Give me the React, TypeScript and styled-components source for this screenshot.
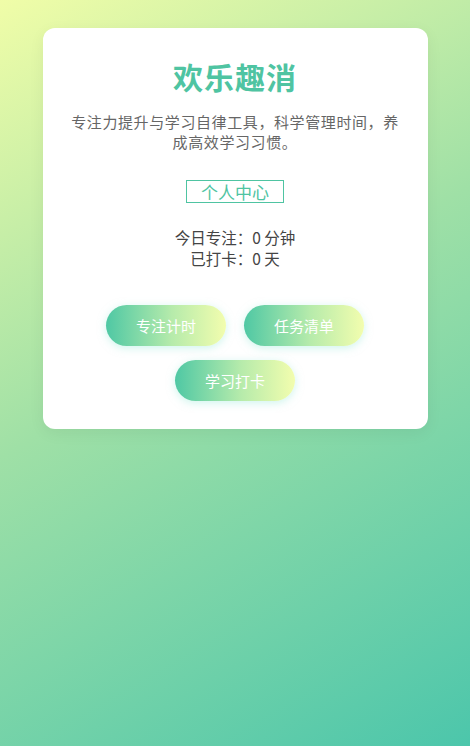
import React from 'react';
import styled, { createGlobalStyle } from 'styled-components';

const GlobalStyle = createGlobalStyle`
  html, body {
    margin: 0;
    padding: 0;
    min-height: 100%;
  }
  body {
    font-family: "Noto Sans CJK SC", "Noto Sans", sans-serif;
    background: linear-gradient(150deg, #f0fda8 0%, #9fe0a6 45%, #4cc6ab 100%);
    min-height: 746px;
  }
`;

const Page = styled.div`
  min-height: 746px;
  padding-top: 28px;
  box-sizing: border-box;
`;

const Card = styled.div`
  width: 385px;
  margin: 0 auto;
  background: #ffffff;
  border-radius: 12px;
  box-shadow: 0 4px 16px rgba(0, 0, 0, 0.06);
  padding: 27px 24px 28px;
  box-sizing: border-box;
  display: flex;
  flex-direction: column;
  align-items: center;
`;

const Title = styled.h1`
  margin: 0;
  font-size: 30px;
  line-height: 42px;
  font-weight: 700;
  color: #4fc4a2;
  letter-spacing: 1px;
`;

const Desc = styled.p`
  margin: 15px 0 0;
  font-size: 15px;
  line-height: 20px;
  letter-spacing: 0.6px;
  color: #666;
  text-align: center;
`;

const ProfileLink = styled.a`
  margin-top: 28px;
  padding: 0 14px;
  border: 1px solid #4fc4a2;
  color: #4fc4a2;
  font-size: 17px;
  line-height: 21px;
  cursor: pointer;
`;

const Stats = styled.div`
  margin-top: 24px;
  display: flex;
  flex-direction: column;
  align-items: center;
  font-size: 15.5px;
  line-height: 21px;
  color: #444;
`;

const ButtonRow = styled.div`
  margin-top: 36px;
  width: 280px;
  display: flex;
  flex-wrap: wrap;
  justify-content: center;
  gap: 14px 18px;
`;

const PillButton = styled.button`
  width: 120px;
  height: 41px;
  border: none;
  border-radius: 21px;
  background: linear-gradient(90deg, #4fc8a4 0%, #b6ebab 55%, #f2fdae 100%);
  color: #ffffff;
  font-family: inherit;
  font-size: 15px;
  box-shadow: 0 2px 8px rgba(160, 235, 220, 0.5);
  cursor: pointer;
`;

export default function App() {
  return (
    <>
      <GlobalStyle />
      <Page>
        <Card>
          <Title>欢乐趣消</Title>
          <Desc>专注力提升与学习自律工具，科学管理时间，养成高效学习习惯。</Desc>
          <ProfileLink>个人中心</ProfileLink>
          <Stats>
            <span>今日专注：0 分钟</span>
            <span>已打卡：0 天</span>
          </Stats>
          <ButtonRow>
            <PillButton>专注计时</PillButton>
            <PillButton>任务清单</PillButton>
            <PillButton>学习打卡</PillButton>
          </ButtonRow>
        </Card>
      </Page>
    </>
  );
}
